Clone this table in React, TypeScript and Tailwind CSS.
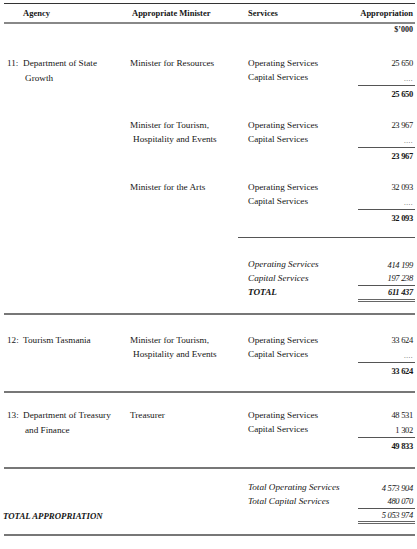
import React from "react";

interface Block {
  minister: string[];
  operating: string;
  capital: string;
  total: string;
}

interface Section {
  no: string;
  agency: string[];
  blocks: Block[];
}

const sections: Section[] = [
  {
    no: "11:",
    agency: ["Department of State", "Growth"],
    blocks: [
      { minister: ["Minister for Resources"], operating: "25 650", capital: "....", total: "25 650" },
      { minister: ["Minister for Tourism,", "Hospitality and Events"], operating: "23 967", capital: "....", total: "23 967" },
      { minister: ["Minister for the Arts"], operating: "32 093", capital: "....", total: "32 093" },
    ],
  },
  {
    no: "12:",
    agency: ["Tourism Tasmania"],
    blocks: [
      { minister: ["Minister for Tourism,", "Hospitality and Events"], operating: "33 624", capital: "....", total: "33 624" },
    ],
  },
  {
    no: "13:",
    agency: ["Department of Treasury", "and Finance"],
    blocks: [{ minister: ["Treasurer"], operating: "48 531", capital: "1 302", total: "49 833" }],
  },
];

const Num = ({ value }: { value: string }) =>
  value === "...." ? (
    <span className="text-[7px] tracking-[0.5px] text-[#555] pt-[2px]">....</span>
  ) : (
    <span className="text-[8.5px] tracking-[-0.3px] whitespace-pre">{value}</span>
  );

const Agency = ({ no, lines }: { no: string; lines: string[] }) => (
  <div className="flex">
    <span className="w-[19px] h-[15px] shrink-0 pl-[3px] flex items-center">{no}</span>
    <div>
      {lines.map((line, i) => (
        <div key={line} className={`flex items-center ${i === 0 ? "h-[15px]" : "h-[15px] pl-[2px]"}`}>
          {line}
        </div>
      ))}
    </div>
  </div>
);

const ServiceBlock = ({ block }: { block: Block }) => (
  <div className="grid grid-cols-[118px_110px_57px]">
    <div>
      {block.minister.map((m, i) => (
        <div key={m} className={`flex items-center ${i === 0 ? "h-[15px]" : "h-[14px] pl-[3px]"}`}>
          {m}
        </div>
      ))}
    </div>
    <div>
      <div className="h-[15px] flex items-center">Operating Services</div>
      <div className="h-[14px] flex items-center">Capital Services</div>
    </div>
    <div>
      <div className="h-[15px] flex items-center justify-end pr-[2px]">
        <Num value={block.operating} />
      </div>
      <div className="h-[15px] flex items-center justify-end pr-[2px] border-b border-[#555]">
        <Num value={block.capital} />
      </div>
      <div className="h-[17px] flex items-center justify-end pr-[2px] font-bold">
        <Num value={block.total} />
      </div>
    </div>
  </div>
);

export default function App() {
  return (
    <div className="w-[417px] h-[549px] bg-white pl-[4px] pr-[2px] font-['Liberation_Serif',serif] text-[9.2px] text-[#161616] leading-none">
      {/* header */}
      <div className="mt-[3px] border-t border-[#333]" />
      <div className="grid grid-cols-[126px_118px_110px_57px] h-[18px] items-center font-bold text-[8.5px]">
        <div className="pl-[19px]">Agency</div>
        <div className="pl-[2px]">Appropriate Minister</div>
        <div>Services</div>
        <div className="text-right pr-[2px]">Appropriation</div>
      </div>
      <div className="border-t-2 border-[#888]" />
      <div className="h-[12px] flex items-center justify-end pr-[2px] font-bold text-[8px]">$’000</div>

      {/* 11 */}
      <div className="mt-[20px] grid grid-cols-[126px_1fr]">
        <Agency no={sections[0].no} lines={sections[0].agency} />
        <div className="flex flex-col gap-[15px]">
          {sections[0].blocks.map((b, i) => (
            <ServiceBlock key={i} block={b} />
          ))}
        </div>
      </div>

      <div className="mt-[10px] ml-[234px] border-t border-[#555]" />

      {/* sub totals */}
      <div className="mt-[20px] ml-[244px] grid grid-cols-[110px_57px] italic">
        <div>
          <div className="h-[14px] flex items-center">Operating Services</div>
          <div className="h-[14px] flex items-center">Capital Services</div>
          <div className="h-[13px] flex items-center font-bold">TOTAL</div>
        </div>
        <div>
          <div className="h-[14px] flex items-center justify-end pr-[2px]">
            <Num value="414 199" />
          </div>
          <div className="h-[14px] flex items-center justify-end pr-[2px] border-b border-[#555]">
            <Num value="197 238" />
          </div>
          <div className="h-[16px] flex items-center justify-end pr-[2px] font-bold border-b-[3px] border-double border-[#666]">
            <Num value="611 437" />
          </div>
        </div>
      </div>

      <div className="mt-[11px] border-t-2 border-[#777]" />

      {/* 12 */}
      <div className="mt-[18px] grid grid-cols-[126px_1fr]">
        <Agency no={sections[1].no} lines={sections[1].agency} />
        <ServiceBlock block={sections[1].blocks[0]} />
      </div>

      <div className="mt-[11px] border-t-2 border-[#777]" />

      {/* 13 */}
      <div className="mt-[15px] grid grid-cols-[126px_1fr]">
        <Agency no={sections[2].no} lines={sections[2].agency} />
        <ServiceBlock block={sections[2].blocks[0]} />
      </div>

      <div className="mt-[12px] border-t-2 border-[#777]" />

      {/* grand totals */}
      <div className="mt-[12px] grid grid-cols-[244px_110px_57px] italic">
        <div className="flex flex-col justify-end">
          <div className="h-[15px] flex items-center font-bold text-[8.8px] -ml-[1px]">TOTAL APPROPRIATION</div>
        </div>
        <div>
          <div className="h-[14px] flex items-center">Total Operating Services</div>
          <div className="h-[14px] flex items-center">Total Capital Services</div>
          <div className="h-[15px]" />
        </div>
        <div>
          <div className="h-[14px] flex items-center justify-end pr-[2px]">
            <Num value="4 573 904" />
          </div>
          <div className="h-[14px] flex items-center justify-end pr-[2px] border-b border-[#555]">
            <Num value="480 070" />
          </div>
          <div className="h-[15px] flex items-center justify-end pr-[2px] border-b-[3px] border-double border-[#666]">
            <Num value="5 053 974" />
          </div>
        </div>
      </div>

      <div className="mt-[10px] border-t-2 border-[#777]" />
    </div>
  );
}
